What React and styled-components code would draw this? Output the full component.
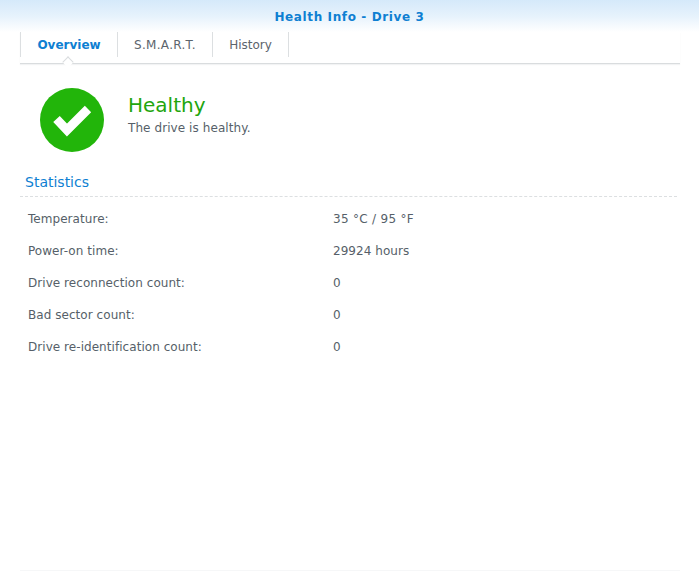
import React from "react";
import styled, { createGlobalStyle } from "styled-components";

const GlobalStyle = createGlobalStyle`
    html, body {
        margin: 0;
        padding: 0;
        background: #fff;
    }
    body {
        font-family: "DejaVu Sans", Verdana, sans-serif;
        font-size: 12px;
        color: #565f69;
        letter-spacing: 0.05px;
    }
`;

const Window = styled.div`
    width: 699px;
    height: 571px;
    overflow: hidden;
    display: flex;
    flex-direction: column;
    background: #fff;
`;

const Header = styled.div`
    height: 32px;
    flex: none;
    text-align: center;
    line-height: 34px;
    font-size: 12px;
    font-weight: 700;
    letter-spacing: 0.62px;
    color: #0e7fd2;
    background: linear-gradient(to bottom, #d5e9fa 0%, #e6f2fc 50%, #ffffff 100%);
`;

const Body = styled.div`
    flex: 1;
    margin: 0 19px 0 20px;
    display: flex;
    flex-direction: column;
    border-bottom: 1px solid #f6f7f8;
`;

const Tabs = styled.div`
    height: 31px;
    flex: none;
    display: flex;
    align-items: flex-start;
    border-bottom: 1px solid #d9dcde;
    box-shadow: 0 1px 1px #f2f3f4;
`;

const Tab = styled.div`
    position: relative;
    width: ${ props => props.width }px;
    height: 25px;
    line-height: 27px;
    text-align: center;
    border-left: 1px solid #dcdfe1;
    font-weight: ${ props => props.active ? 700 : 400 };
    letter-spacing: ${ props => props.spacing || 0 }px;
    color: ${ props => props.active ? "#0e7fd2" : "#5c646c" };
    &:last-child {
        border-right: 1px solid #dcdfe1;
    }
`;

const Notch = styled.span`
    position: absolute;
    left: 43px;
    top: 26px;
    width: 7px;
    height: 7px;
    background: #fff;
    border-left: 1px solid #d9dcde;
    border-top: 1px solid #d9dcde;
    transform: rotate(45deg);
`;

const Status = styled.div`
    display: flex;
    align-items: flex-start;
    padding: 24px 0 0 20px;
    height: 64px;
    flex: none;
`;

const StatusIcon = styled.svg`
    width: 64px;
    height: 64px;
    flex: none;
`;

const StatusText = styled.div`
    margin: 5px 0 0 24px;
`;

const StatusTitle = styled.div`
    font-size: 20px;
    line-height: 25px;
    letter-spacing: 0;
    color: #22a50d;
`;

const StatusDescription = styled.div`
    line-height: 20px;
    letter-spacing: 0.08px;
`;

const Statistics = styled.div`
    margin: 20px 3px 0 0;
`;

const SectionTitle = styled.div`
    padding: 0 0 4px 5px;
    font-size: 14px;
    line-height: 20px;
    letter-spacing: 0;
    color: #0e7fd2;
    border-bottom: 1px dashed #dcdfe1;
`;

const StatsList = styled.div`
    display: flex;
    flex-direction: column;
    padding: 6px 0 0 8px;
`;

const StatRow = styled.div`
    display: grid;
    grid-template-columns: 305px 1fr;
    height: 32px;
    line-height: 32px;
`;

const StatValue = styled.span`
    letter-spacing: ${ props => props.wide ? 0.3 : 0.05 }px;
`;

const stats = [
    ["Temperature:", "35 °C / 95 °F", true],
    ["Power-on time:", "29924 hours"],
    ["Drive reconnection count:", "0"],
    ["Bad sector count:", "0"],
    ["Drive re-identification count:", "0"],
];

export default function App() {
    return (
        <Window>
            <GlobalStyle />
            <Header>Health Info - Drive 3</Header>
            <Body>
                <Tabs>
                    <Tab active width={96}>Overview<Notch /></Tab>
                    <Tab width={94} spacing={0.3}>S.M.A.R.T.</Tab>
                    <Tab width={75}>History</Tab>
                </Tabs>
                <Status>
                    <StatusIcon viewBox="0 0 64 64">
                        <circle cx="32" cy="32" r="32" fill="#22b50a" />
                        <path d="M16.5 31 L27 42 L48 21" fill="none" stroke="#fff" strokeWidth="9" />
                    </StatusIcon>
                    <StatusText>
                        <StatusTitle>Healthy</StatusTitle>
                        <StatusDescription>The drive is healthy.</StatusDescription>
                    </StatusText>
                </Status>
                <Statistics>
                    <SectionTitle>Statistics</SectionTitle>
                    <StatsList>
                        {stats.map(([label, value, wide]) => (
                            <StatRow key={label}>
                                <span>{label}</span>
                                <StatValue wide={wide}>{value}</StatValue>
                            </StatRow>
                        ))}
                    </StatsList>
                </Statistics>
            </Body>
        </Window>
    );
}
